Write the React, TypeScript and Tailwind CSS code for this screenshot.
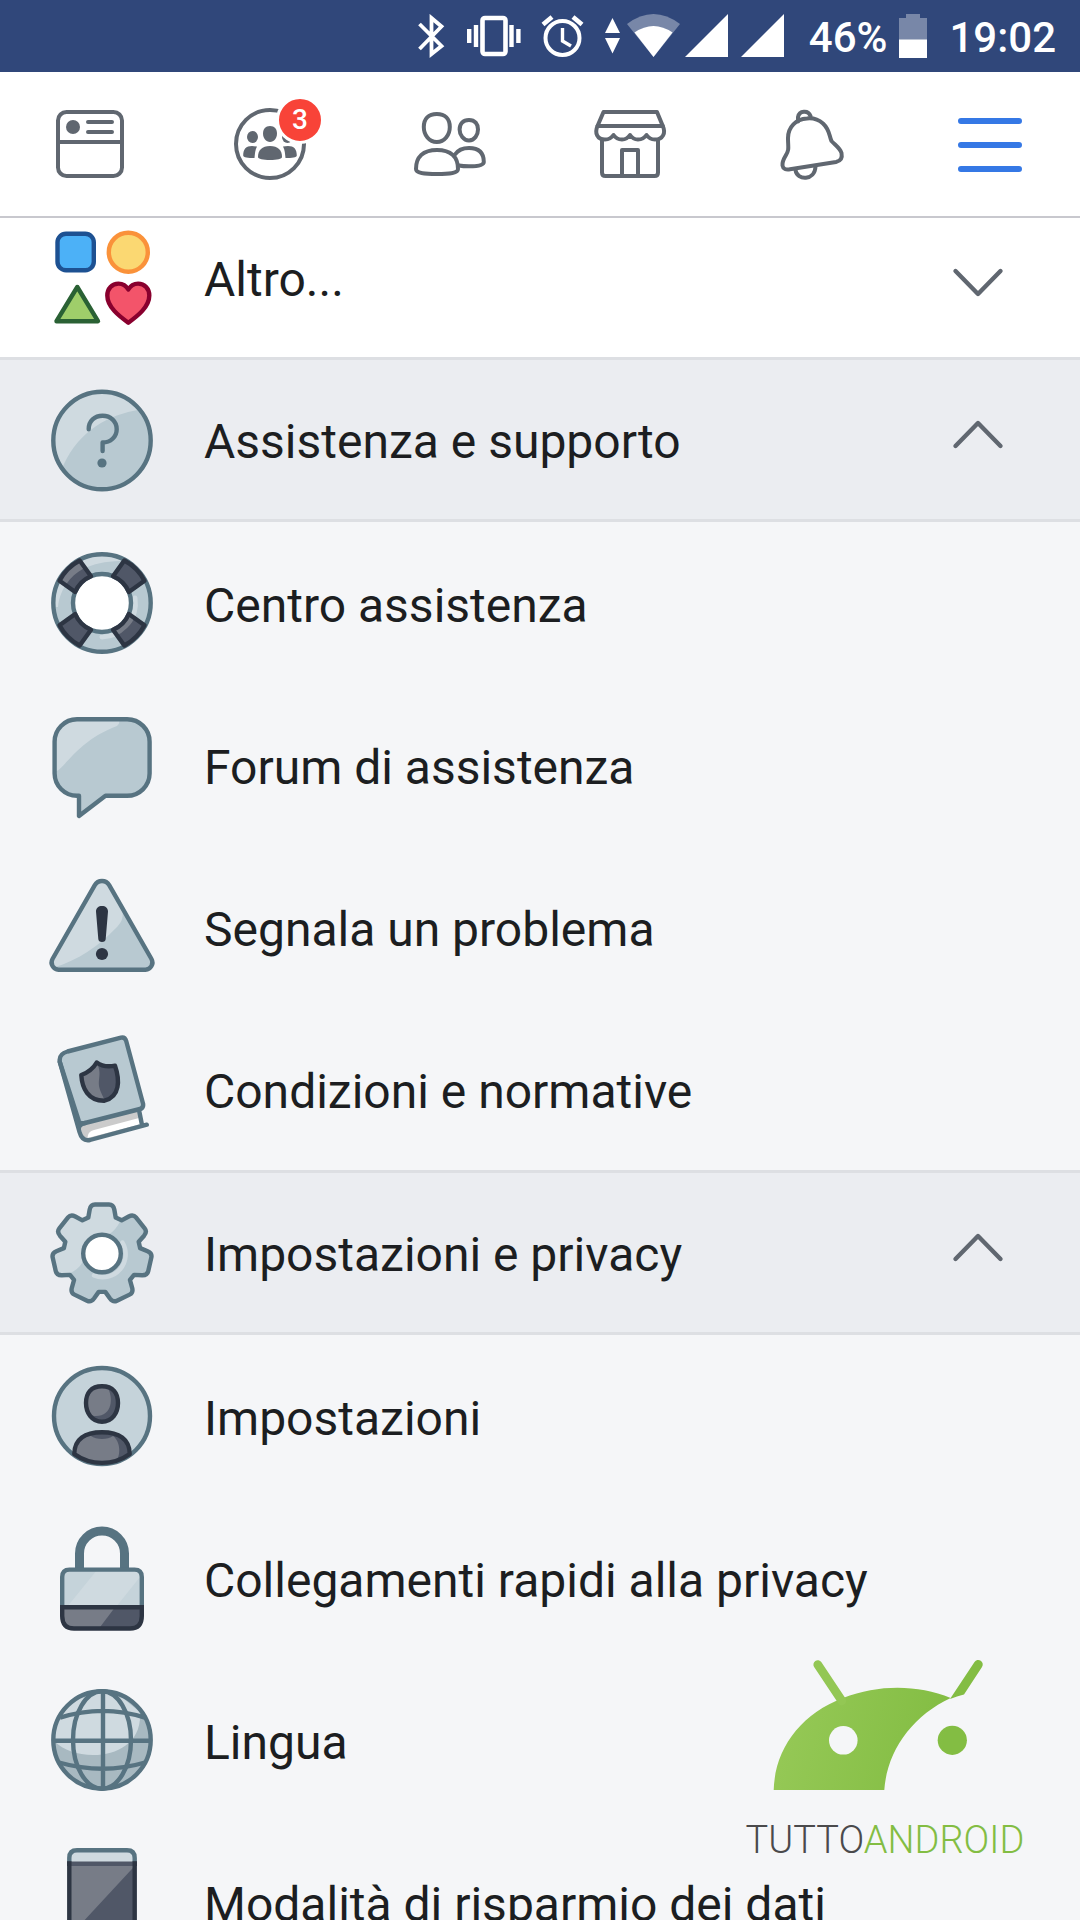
import React from 'react';

const SLATE = '#577381';
const STEEL = '#b8c9d1';
const MIST = '#cfdae0';
const INK = '#2d3543';
const GRAPHITE = '#505767';
const ASH = '#777c87';

type IconProps = { children: React.ReactNode };

/* ---------- Status bar ---------- */

function BluetoothIcon() {
  return (
    <svg viewBox="0 0 28 44" className="w-7 h-11" fill="none" stroke="white" strokeWidth="3.8" aria-hidden="true">
      <path d="M2.5 10L24.5 32L14.5 40V4L24.5 12.500L2.500 35" />
    </svg>
  );
}

function VibrateIcon() {
  return (
    <svg viewBox="0 0 56 44" className="w-14 h-11" fill="none" stroke="white" strokeWidth="4.4" aria-hidden="true">
      <rect x="17.500" y="4" width="23" height="36" rx="2.500" strokeWidth="4.600" />
      <path d="M4.200 15V29M11 11V33M46.500 11V33M53.400 15V29" />
    </svg>
  );
}

function AlarmIcon() {
  return (
    <svg viewBox="0 0 44 44" className="w-11 h-11" fill="none" stroke="white" strokeWidth="4" aria-hidden="true">
      <circle cx="21.500" cy="24" r="17" />
      <path d="M21.500 14V27L30 32" strokeWidth="3.400" />
      <path d="M2 10.500L11 3M32 3L41 10.500" strokeWidth="4.600" />
    </svg>
  );
}

function WifiIcon() {
  return (
    <svg viewBox="0 0 76 44" className="w-[76px] h-11" fill="white" aria-hidden="true">
      <path d="M7.500 4L15 19H0ZM0 24H15L7.500 39.500Z" />
      <path d="M22 10Q48.500 -10 75 10L48.500 43Z" opacity="0.35" />
      <path d="M29.500 18.500Q48.500 5.500 67.500 18.500L48.500 43Z" />
    </svg>
  );
}

function SignalIcon() {
  return (
    <svg viewBox="0 0 44 44" className="w-11 h-11" fill="white" aria-hidden="true">
      <path d="M0 43H43V0Z" />
    </svg>
  );
}

function BatteryIcon() {
  return (
    <svg viewBox="0 0 28 44" className="w-7 h-11" fill="white" aria-hidden="true">
      <path d="M0 4H7V0H21V4H28V26H0Z" opacity="0.35" />
      <path d="M0 25.500H28V44H0Z" />
    </svg>
  );
}

function StatusBar() {
  return (
    <div className="shrink-0 h-[72px] bg-[#30477a] flex items-center justify-end pr-6 text-white text-[42px] font-medium leading-none">
      <div className="flex items-center gap-5 mr-6">
        <BluetoothIcon />
        <VibrateIcon />
        <AlarmIcon />
        <div className="flex items-center">
          <WifiIcon />
          <div className="flex items-center gap-3 pl-1">
            <SignalIcon />
            <SignalIcon />
          </div>
        </div>
      </div>
      <span className="pt-1">46%</span>
      <div className="ml-3 mr-[22px]">
        <BatteryIcon />
      </div>
      <span className="pt-1">19:02</span>
    </div>
  );
}

/* ---------- Tab bar ---------- */

function TabIcon({ children }: IconProps) {
  return (
    <svg
      viewBox="0 0 72 72"
      className="w-[72px] h-[72px] overflow-visible"
      fill="none"
      stroke="#606770"
      strokeWidth="4"
      strokeLinecap="round"
      strokeLinejoin="round"
      aria-hidden="true"
    >
      {children}
    </svg>
  );
}

const tabs = [
  {
    label: 'Notizie',
    icon: (
      <TabIcon>
        <rect x="4" y="4" width="64" height="64" rx="8.500" />
        <path d="M4 34H68" />
        <circle cx="19" cy="19" r="7" fill="#606770" stroke="none" />
        <path d="M34 14H58M34 24H58" />
      </TabIcon>
    ),
  },
  {
    label: 'Gruppi',
    badge: 3,
    icon: (
      <TabIcon>
        <circle cx="36" cy="36" r="34" />
        <g fill="#606770" stroke="none">
          <path d="M36 18C40.500 18 43 21 43 25.500S40 34 36 34 29 30 29 25.500 31.500 18 36 18Z" />
          <path d="M24 49C24 42 28 38 36 38S48 42 48 49C48 51 43 52 36 52S24 51 24 49Z" />
          <ellipse cx="18.500" cy="29" rx="5.500" ry="6" />
          <ellipse cx="53.500" cy="29" rx="5.500" ry="6" />
          <path d="M23 38.500C21 42 21 46 20.500 50C14 50 9.200 49.500 9.200 47.500C9.200 41 12 38 18 38Z" />
          <path d="M49 38.500C51 42 51 46 51.500 50C58 50 62.800 49.500 62.800 47.500C62.800 41 60 38 54 38Z" />
        </g>
      </TabIcon>
    ),
  },
  {
    label: 'Amici',
    icon: (
      <TabIcon>
        <path d="M22.800 6C31 6 35.800 11 35.800 19S30.500 34 22.800 34 9.800 27 9.800 19 14.500 6 22.800 6Z" />
        <path d="M2 61C2 49 9 42 23 42S44 49 44 61C44 65 36 66 23 66S2 65 2 61Z" />
        <path d="M55 12C61 12 64 16 64 21.500S60.500 32.500 55 32.500 45.600 27 45.600 21.500 49 12 55 12Z" />
        <path d="M41 46.500C44 42 48 40 55 40C65 40 69.800 45 69.800 54C69.800 57.500 63 58.300 55 58.300C51 58.300 47.500 58 45 57.500" />
      </TabIcon>
    ),
  },
  {
    label: 'Marketplace',
    icon: (
      <TabIcon>
        <path d="M3.500 18L9.500 4H63L68.800 18Z" />
        <path d="M3.500 18C0.500 25 3 31.500 11 31.500C15 31.500 17.500 30 19.500 27C21.500 30 24 31.500 28 31.500S34 30 36 27C38 30 40 31.500 44 31.500S50.500 30 52.500 27C54.500 30 57 31.500 61 31.500C69 31.500 72 25 68.800 18" />
        <path d="M8 32V64.500Q8 68 11.500 68H60.500Q64 68 64 64.500V32M28 68V42H44V68" />
      </TabIcon>
    ),
  },
  {
    label: 'Notifiche',
    icon: (
      <TabIcon>
        <path d="M24 13.500V9A6.500 6.500 0 0 1 36.500 8V10" />
        <path d="M33 10.500C22 11 14 19 14 30C14 40 15.500 41 12 47C9 52 8 54.500 8.500 57.500C9 61 12 62 16 61.300L62 54C67 53 68.500 50 67.500 45C66 40 61 37 57.500 33C55 28 56 22 49 15.500C45 12 39 9.800 33 10.500Z" />
        <path d="M21.500 62C23 73 41 73 41.500 58.500" />
      </TabIcon>
    ),
  },
  {
    label: 'Menu',
    active: true,
    icon: (
      <TabIcon>
        <path d="M7 13H65M7 37H65M7 61H65" stroke="#3578e5" strokeWidth="6" />
      </TabIcon>
    ),
  },
];

function TabBar() {
  return (
    <nav className="shrink-0 relative z-10 grid grid-cols-6 bg-white border-b-2 border-[#c8c8ce]">
      {tabs.map((tab) => (
        <button
          key={tab.label}
          aria-label={tab.label}
          aria-current={tab.active ? 'page' : undefined}
          className="h-36 flex items-center justify-center"
        >
          <span className="relative">
            {tab.icon}
            {tab.badge && (
              <span className="absolute -top-3 left-[42px] w-12 h-12 rounded-full bg-[#f84338] border-3 border-white text-white text-[28px] leading-none font-medium flex items-center justify-center">
                {tab.badge}
              </span>
            )}
          </span>
        </button>
      ))}
    </nav>
  );
}

/* ---------- Menu icons ---------- */

function MenuIcon({ children }: IconProps) {
  return (
    <svg
      viewBox="0 0 108 108"
      className="shrink-0 w-[108px] h-[108px]"
      strokeWidth="4.4"
      strokeLinecap="round"
      strokeLinejoin="round"
      fill="none"
      aria-hidden="true"
    >
      {children}
    </svg>
  );
}

function ShapesIcon() {
  return (
    <MenuIcon>
      <rect x="9.500" y="9.700" width="36.300" height="36.500" rx="8.500" fill="#4cb1f7" stroke="#1d5192" />
      <circle cx="80.300" cy="28.200" r="19.500" fill="#fbd872" stroke="#fa923a" />
      <path d="M29.300 63L50 97.200H8.500Z" fill="#9fce6a" stroke="#2a6134" />
      <path
        d="M80.300 98.700C71 92 59.300 83 59.300 71.500C59.300 64.500 64 59.600 70.500 59.600C75 59.600 78 61.500 80.300 65.500C82.600 61.500 85.600 59.600 90.100 59.600C96.600 59.600 101.300 64.500 101.300 71.500C101.300 83 89.600 92 80.300 98.700Z"
        fill="#f3546a"
        stroke="#89002e"
      />
    </MenuIcon>
  );
}

function HelpIcon() {
  return (
    <MenuIcon>
      <clipPath id="help-disc">
        <circle cx="54" cy="54.500" r="48" />
      </clipPath>
      <circle cx="54" cy="54.500" r="48.700" fill={STEEL} />
      <path d="M92 23.500C60 29 32 44 15.500 79L0 108V0H92Z" fill={MIST} clipPath="url(#help-disc)" />
      <circle cx="54" cy="54.500" r="48.700" stroke={SLATE} />
      <path d="M40.700 43.200C40.700 35 46.500 29.800 54.600 29.800S68.700 35.500 68.700 43.200 62.500 56.500 54.600 56.500V65" stroke={SLATE} />
      <circle cx="54" cy="77" r="4.600" fill={SLATE} />
    </MenuIcon>
  );
}

const BUOY_BAND = 'M76.3 11.500A48 48 0 0 1 96.500 31.700L80.800 43A29 29 0 0 0 65 27.200Z';
const BUOY_SHINE = 'M10 58C12 38 26 23 38.700 18.300C50 13.500 62 12 78 12L54 2L16 14L2 58Z';

function BuoyIcon() {
  return (
    <MenuIcon>
      <clipPath id="buoy-bands">
        <path d={BUOY_BAND} transform="rotate(-90 54 54)" />
        <path d={BUOY_BAND} transform="rotate(90 54 54)" />
      </clipPath>
      <clipPath id="buoy-disc">
        <circle cx="54" cy="54" r="47" />
      </clipPath>
      <circle cx="54" cy="54" r="48.700" fill={STEEL} />
      <path d={BUOY_SHINE} fill={MIST} clipPath="url(#buoy-disc)" />
      <path d="M87 49A34 34 0 0 1 54 88" stroke={MIST} strokeWidth="5" />
      <circle cx="54" cy="54" r="48.700" stroke={SLATE} />
      <circle cx="54" cy="54" r="29" fill="white" stroke={SLATE} />
      {[0, 90, 180, 270].map((angle) => (
        <path key={angle} d={BUOY_BAND} transform={`rotate(${angle} 54 54)`} fill={GRAPHITE} />
      ))}
      <g clipPath="url(#buoy-bands)">
        <path d={BUOY_SHINE} fill={ASH} />
        <path d="M87 49A34 34 0 0 1 49 87" stroke={ASH} strokeWidth="5" />
      </g>
      {[0, 90, 180, 270].map((angle) => (
        <path key={angle} d={BUOY_BAND} transform={`rotate(${angle} 54 54)`} stroke={INK} />
      ))}
    </MenuIcon>
  );
}

const BUBBLE =
  'M29 8.200H79A22.500 22.500 0 0 1 101.600 31V62.500A22.500 22.500 0 0 1 79 84.800H57.500L31 105V84.800H29A22.500 22.500 0 0 1 6.600 62.500V31A22.500 22.500 0 0 1 29 8.200Z';

function BubbleIcon() {
  return (
    <MenuIcon>
      <path d={BUBBLE} fill={STEEL} />
      <path d="M7 60C14 62 28 30 69 15Q72 13 71 9H29A22 22 0 0 0 7 31Z" fill={MIST} />
      <path d={BUBBLE} stroke={SLATE} />
    </MenuIcon>
  );
}

const WARNING = 'M46.800 12.200A8.300 8.300 0 0 1 61.200 12.200L103.500 86A7.200 7.200 0 0 1 97.500 96.700H10.500A7.200 7.200 0 0 1 4.500 86Z';

function WarningIcon() {
  return (
    <MenuIcon>
      <path d={WARNING} fill={STEEL} />
      <path d="M6 94.500C30 87 50 74 68 55C73 50 75.500 46 74.500 38L61 12L54 8L47 12L5 86Z" fill={MIST} />
      <path d={WARNING} stroke={SLATE} />
      <path d="M48 38.500C48 35 50.500 33 54 33S60 35 60 38.500L57.700 66Q57.500 69 54 69T50.300 66Z" fill={INK} />
      <circle cx="54" cy="81" r="6.100" fill={INK} />
    </MenuIcon>
  );
}

const SHIELD = 'M48.700 27.500C54 31.500 60 32 67 30.700C72 45 72 62 56.500 65.700C40 66 34 53 33.300 40C40 37.500 45 34 48.700 27.500Z';

function BookIcon() {
  return (
    <MenuIcon>
      <path d="M33 89L91 75L94 89L40 105Q32 101 33 89Z" fill="#cbcbcb" />
      <path d="M39.500 103C40 98 42 96 46 95L91 83L93 89Z" fill="white" />
      <path d="M19.500 16.500L73 2.600Q77 1.800 78.200 6L95 68.500Q95.800 73 92 74L37 88Q32 89 30.800 86L11.800 27Q10.500 19 19.500 16.500Z" fill={STEEL} stroke={SLATE} />
      <path d="M11.800 27L31.500 97Q34 106.500 42 105L98.800 89.700M31 93Q31 89.500 37 88M91 75L94 90" stroke={SLATE} />
      <path d={SHIELD} fill={GRAPHITE} />
      <path d="M48.700 27.500C54 38 50 43 51 51C52 57 55 60 56.500 65.700C40 66 34 53 33.300 40Z" fill={ASH} />
      <path d={SHIELD} stroke={INK} />
    </MenuIcon>
  );
}

// half a tooth, measured from the gear's centre; the other half is its mirror
function gearPath() {
  const point = (x: number, y: number, turn: number) => {
    const a = (turn * Math.PI * 2) / 7;
    const px = 54 + x * Math.cos(a) - y * Math.sin(a);
    const py = 54.5 + x * Math.sin(a) + y * Math.cos(a);
    return `${px.toFixed(2)} ${py.toFixed(2)}`;
  };
  let d = '';
  for (let i = 0; i < 7; i++) {
    d += `${i === 0 ? 'M' : 'L'}${point(-13.7, -36, i)}L${point(-12.3, -44, i)}Q${point(-11.3, -49, i)} ${point(-7, -49, i)}`;
    d += `L${point(7, -49, i)}Q${point(11.3, -49, i)} ${point(12.3, -44, i)}L${point(13.7, -36, i)}`;
  }
  return d + 'Z';
}

const GEAR = gearPath();

function GearIcon() {
  return (
    <MenuIcon>
      <clipPath id="gear-body">
        <path d={GEAR} />
      </clipPath>
      <path d={GEAR} fill={STEEL} />
      <path d="M74 18C70 28 66 32 60 36L36 60C33 67 28 73 18 75L0 80V0H74Z" fill={MIST} clipPath="url(#gear-body)" />
      <path d="M74.500 43.500A23 23 0 0 1 46 76.500" stroke={MIST} strokeWidth="4.400" />
      <path d={GEAR} stroke={SLATE} />
      <circle cx="54" cy="54.500" r="18.800" fill="white" stroke={SLATE} />
    </MenuIcon>
  );
}

const HEAD = 'M54 24.200C65 24.200 70 31 70 41S64 59.800 54 59.800 38 51 38 41 43 24.200 54 24.200Z';
const SHOULDERS = 'M26.300 92C26.300 77 37 70.200 54 70.200S81.700 77 81.700 92A47.500 47.500 0 0 1 26.300 92Z';

function ProfileIcon() {
  return (
    <MenuIcon>
      <clipPath id="profile-head">
        <path d={HEAD} />
      </clipPath>
      <clipPath id="profile-shoulders">
        <path d={SHOULDERS} />
      </clipPath>
      <circle cx="54" cy="54" r="48" fill="#c5d3da" stroke={SLATE} />
      <path d={HEAD} fill={GRAPHITE} />
      <path d="M59 24C66 36 64 54 48 54C44 54 40 52 38 48V24Z" fill={ASH} clipPath="url(#profile-head)" />
      <path d={HEAD} stroke={INK} />
      <path d={SHOULDERS} fill={GRAPHITE} />
      <path d="M20 100V80L38 72L43 74C48 78 60 78 65 74C71 78 74 90 68 100Z" fill={ASH} clipPath="url(#profile-shoulders)" />
      <path d={SHOULDERS} stroke={INK} />
    </MenuIcon>
  );
}

function LockIcon() {
  return (
    <MenuIcon>
      <path d="M31.500 46V29.500A22.500 22.500 0 0 1 76.500 29.500V46" stroke={SLATE} strokeWidth="9" strokeLinecap="butt" />
      <path d="M14.200 83V53Q14.200 45.600 21.500 45.600H86.500Q93.800 45.600 93.800 53V83Z" fill="#c5d3da" />
      <path d="M49 46H88Q92 48 92 53L68 83H19Z" fill={MIST} />
      <path d="M14.200 83V53Q14.200 45.600 21.500 45.600H86.500Q93.800 45.600 93.800 53V83" stroke={SLATE} strokeLinecap="butt" />
      <path d="M14.200 83.200H93.800V92Q93.800 104.500 82 104.500H26Q14.200 104.500 14.200 92Z" fill={ASH} />
      <path d="M67 83.200H93.800V92Q93.800 104.500 82 104.500H51Z" fill={GRAPHITE} />
      <path d="M14.200 83.200H93.800V92Q93.800 104.500 82 104.500H26Q14.200 104.500 14.200 92Z" stroke={INK} strokeLinejoin="miter" />
    </MenuIcon>
  );
}

function GlobeIcon() {
  return (
    <MenuIcon>
      <clipPath id="globe-disc">
        <circle cx="54" cy="54" r="48" />
      </clipPath>
      <circle cx="54" cy="54" r="48.700" fill="#a8b9c1" />
      <path d="M4 53C14 64 28 69 45 69C70 69 94 56 92 26L60 0H0Z" fill={MIST} clipPath="url(#globe-disc)" />
      <g stroke={SLATE}>
        <circle cx="54" cy="54" r="48.700" />
        <path d="M55 5V103M5 54.700H103M12 31.700Q55 18 97 31.700M11 76.500Q55 89 97 76.500" strokeLinecap="butt" />
        <ellipse cx="54" cy="54" rx="29" ry="48.700" />
      </g>
    </MenuIcon>
  );
}

function PhoneIcon() {
  return (
    <MenuIcon>
      <path d="M21.300 16V10Q21.300 2.300 29 2.300H79Q86.700 2.300 86.700 10V16Z" fill={MIST} />
      <path d="M21.300 14V10Q21.300 2.300 29 2.300H79Q86.700 2.300 86.700 10V14" stroke={SLATE} strokeLinecap="butt" />
      <path d="M21.300 14H86.700V108H21.300Z" fill={ASH} />
      <path d="M86.700 18L20 90V108H86.700Z" fill={GRAPHITE} />
      <path d="M19 15.700H89" stroke={GRAPHITE} strokeLinecap="butt" />
      <path d="M21.300 13.300V108M86.700 13.300V108" stroke={INK} strokeLinecap="butt" />
    </MenuIcon>
  );
}

function Chevron({ open }: { open: boolean }) {
  return (
    <MenuIcon>
      <path d={open ? 'M31.500 60L54 37L76.500 60' : 'M31.500 47L54 70L76.500 47'} stroke="#606770" />
    </MenuIcon>
  );
}

/* ---------- Menu ---------- */

const sections = [
  {
    title: 'Assistenza e supporto',
    icon: HelpIcon,
    items: [
      { label: 'Centro assistenza', icon: BuoyIcon },
      { label: 'Forum di assistenza', icon: BubbleIcon },
      { label: 'Segnala un problema', icon: WarningIcon },
      { label: 'Condizioni e normative', icon: BookIcon },
    ],
  },
  {
    title: 'Impostazioni e privacy',
    icon: GearIcon,
    items: [
      { label: 'Impostazioni', icon: ProfileIcon },
      { label: 'Collegamenti rapidi alla privacy', icon: LockIcon },
      { label: 'Lingua', icon: GlobeIcon },
      { label: 'Modalità di risparmio dei dati', icon: PhoneIcon },
    ],
  },
];

function Menu() {
  return (
    <div className="-mt-5">
      <button className="w-full h-[162px] px-12 flex items-center gap-12 bg-white border-b-3 border-[#dddfe3] text-left" aria-expanded="false">
        <ShapesIcon />
        <span className="flex-1 pt-1">Altro...</span>
        <Chevron open={false} />
      </button>
      {sections.map((section, index) => (
        <section key={section.title}>
          <button
            className={`w-full px-12 flex items-center gap-12 bg-[#ebedf1] border-b-3 border-[#dddfe3] text-left ${
              index > 0 ? 'h-[165px] border-t-3' : 'h-[162px]'
            }`}
            aria-expanded="true"
          >
            <section.icon />
            <span className="flex-1 pt-1">{section.title}</span>
            <Chevron open />
          </button>
          <ul>
            {section.items.map((item) => (
              <li key={item.label}>
                <a href="#" className="h-[162px] px-12 flex items-center gap-12">
                  <item.icon />
                  <span className="pt-1.5">{item.label}</span>
                </a>
              </li>
            ))}
          </ul>
        </section>
      ))}
    </div>
  );
}

function Watermark() {
  return (
    <div className="absolute right-[50px] bottom-14 flex flex-col items-center pointer-events-none">
      <svg viewBox="0 0 290 134" className="w-[290px] h-[134px]" aria-hidden="true">
        <defs>
          <linearGradient id="android-green" x1="34" y1="60" x2="200" y2="100" gradientUnits="userSpaceOnUse">
            <stop offset="0" stopColor="#96c957" />
            <stop offset="1" stopColor="#83bd43" />
          </linearGradient>
        </defs>
        <g fill="url(#android-green)">
          <path d="M33.700 132C35 90 61 56 103 40C140 26 178 27 210.700 40C172 58 147 93 144.300 132Z" />
          <path d="M210 41L234.500 4A4.500 4.500 0 0 1 242 9L224 36.500C219 38 215 39 210 41Z" />
          <circle cx="212.300" cy="82.300" r="14.600" />
        </g>
        <path d="M77.700 6.500L102 43" stroke="#93c754" strokeWidth="8.600" strokeLinecap="round" />
        <circle cx="103.300" cy="82.300" r="14.300" fill="#f5f6f8" />
      </svg>
      <p className="mt-6 text-[38px] leading-[48px] font-light text-[#4a4a4c] whitespace-nowrap">
        TUTTO<span className="text-[#83bd43]">ANDROID</span>
      </p>
    </div>
  );
}

export default function App() {
  return (
    <div className="relative h-screen overflow-hidden flex flex-col bg-[#f5f6f8] font-['Roboto',sans-serif]">
      <StatusBar />
      <TabBar />
      <main className="flex-1 min-h-0 overflow-hidden text-5xl leading-none text-[#1c1e21]">
        <Menu />
      </main>
      <Watermark />
    </div>
  );
}
